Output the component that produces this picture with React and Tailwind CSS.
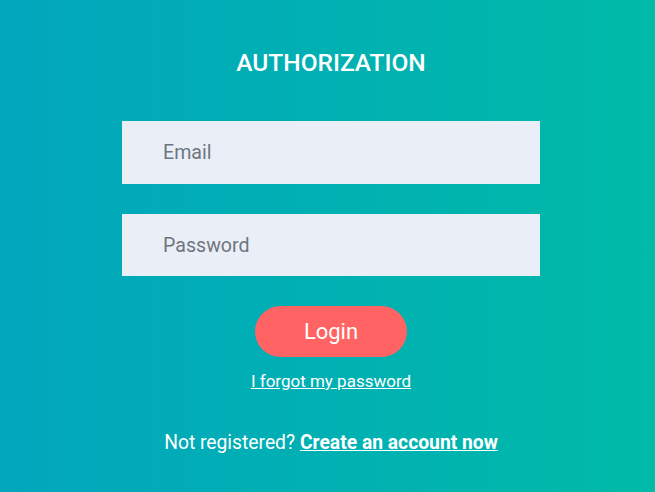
import React from 'react';

export default function App() {
  return (
    <div className="w-[655px] h-[492px] pl-[7px] bg-gradient-to-r from-[#03a6bd] to-[#01baa7] font-['Roboto',sans-serif] flex flex-col items-center">
      <h1 className="mt-[48px] text-[24.5px] leading-[29px] font-medium text-white">AUTHORIZATION</h1>

      <form className="mt-[44px] w-[418px] flex flex-col items-center" onSubmit={(e) => e.preventDefault()}>
        <input
          type="email"
          placeholder="Email"
          className="w-full h-[63px] bg-[#eaeff7] pl-[41px] text-[19.6px] text-[#555] placeholder:text-[#6f7580] outline-none"
        />
        <input
          type="password"
          placeholder="Password"
          className="mt-[30px] w-full h-[62px] bg-[#eaeff7] pl-[41px] text-[19.6px] text-[#555] placeholder:text-[#6f7580] outline-none"
        />
        <button
          type="submit"
          className="mt-[30px] w-[152px] h-[51px] rounded-full bg-[#ff6363] text-white text-[22px] leading-none"
        >
          Login
        </button>
        <a href="#" className="mt-[14px] text-[17px] leading-[20px] text-white underline">
          I forgot my password
        </a>
      </form>

      <p className="mt-[41px] text-[19.3px] leading-[22px] text-white">
        Not registered?{' '}
        <a href="#" className="font-bold underline">Create an account now</a>
      </p>
    </div>
  );
}
